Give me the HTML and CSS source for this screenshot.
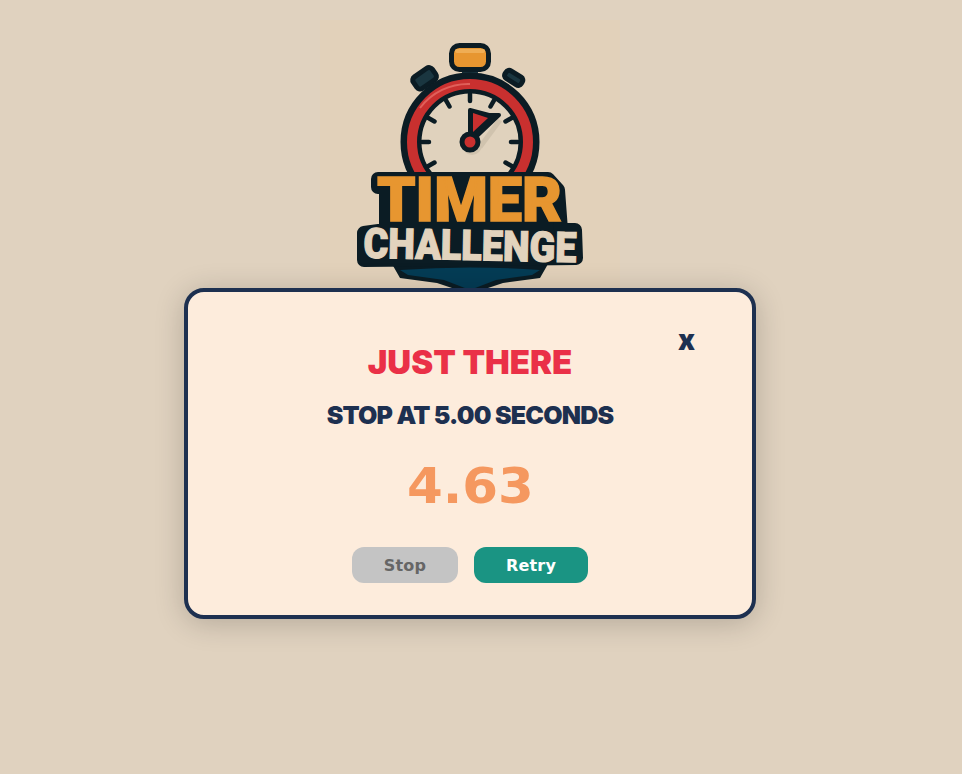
FILE: index.html
```html
<!DOCTYPE html>
<html lang="en">
<head>
<meta charset="utf-8">
<title>Timer Challenge</title>
<link rel="stylesheet" href="styles.css">
</head>
<body>
<main class="page">
  <svg class="logo" viewBox="0 0 300 300" width="300" height="300" role="img" aria-label="Timer Challenge logo">
    <rect width="300" height="300" fill="#e2d1ba"/>
    <rect x="142" y="49" width="16" height="9" fill="#1a3640"/>
    <rect x="131.500" y="25.500" width="37" height="24" rx="8" fill="#e79630" stroke="#0b1c24" stroke-width="5"/>
    <rect x="135" y="29" width="30" height="4" rx="2" fill="#efad54"/>
    <g transform="rotate(-35 105 58)"><rect x="93" y="51" width="23" height="14" rx="4" fill="#1a3640" stroke="#0b1c24" stroke-width="5"/></g>
    <g transform="rotate(32 193 58)"><rect x="184" y="53" width="19" height="9" rx="3.500" fill="#1a3640" stroke="#0b1c24" stroke-width="5"/></g>
    <circle cx="150" cy="122" r="59" fill="#e0d2bd" stroke="#0b1c24" stroke-width="21"/>
    <circle cx="150" cy="122" r="58" fill="none" stroke="#c9302f" stroke-width="10"/>
    <path d="M100 88 A60 60 0 0 1 150 64" fill="none" stroke="#e0605a" stroke-width="2"/>
    <g stroke="#0b1c24" stroke-width="4.500" stroke-linecap="round">
      <path d="M150 74V81M150 163V170M102 122H109M191 122H198"/>
      <path d="M174 80.400L170.500 86.500M191.600 98L185.500 101.500M191.600 146L185.500 142.500M174 163.600L170.500 157.500M126 163.600L129.500 157.500M108.400 146L114.500 142.500M108.400 98L114.500 101.500M126 80.400L129.500 86.500"/>
    </g>
    <path d="M180 100L160 127" stroke="#d0c3ae" stroke-width="5"/>
    <circle cx="152" cy="125" r="10" fill="#d0c3ae"/>
    <path d="M150 90L169 95L179 95L158 115L150 120Z" fill="#0b1c24" stroke="#0b1c24" stroke-width="4" stroke-linejoin="round"/>
    <path d="M153 93L168 98L153 112Z" fill="#c9302f"/>
    <circle cx="150" cy="122" r="8" fill="#c9302f" stroke="#0b1c24" stroke-width="5"/>

    <path d="M72 244L80 258L117 263L150 274L183 263L220 258L228 244Z" fill="#0b1c24"/>
    <path d="M58 159H228L238 170L241 210H255L256 238L44 240L44 213L66 210L66 167L58 167Z" fill="#0b1c24" stroke="#0b1c24" stroke-width="14" stroke-linejoin="round"/>
    <path d="M80 250Q150 245 220 250L212 255L176 260L150 270L124 260L88 255Z" fill="#043c55"/>
    <text class="logo-timer" x="149.500" y="201" textLength="185" lengthAdjust="spacingAndGlyphs">TIMER</text>
    <g transform="rotate(1.250 150 225)">
      <text class="logo-challenge" x="150" y="240" textLength="213" lengthAdjust="spacingAndGlyphs">CHALLENGE</text>
    </g>
  </svg>

  <section class="modal">
    <button class="close" type="button">x</button>
    <h2 class="result">JUST THERE</h2>
    <h3 class="goal">STOP AT 5.00 SECONDS</h3>
    <div class="time">4.63</div>
    <div class="actions">
      <button class="btn btn-stop" type="button">Stop</button>
      <button class="btn btn-retry" type="button">Retry</button>
    </div>
  </section>
</main>
</body>
</html>
```
FILE: styles.css
```css
* { box-sizing: border-box; }
html, body { margin: 0; height: 100%; }
body { background: #e0d2bf; overflow: hidden; }
.page {
  position: relative;
  height: 774px;
  display: flex;
  flex-direction: column;
  align-items: center;
  padding: 20px 22px 0 0;
}
.logo { display: block; flex: none; }
.logo-timer, .logo-challenge {
  font-family: "Roboto", "Liberation Sans", sans-serif;
  font-weight: 900;
  text-anchor: middle;
}
.logo-timer { font-size: 62px; fill: #e79630; stroke: #e79630; stroke-width: 1.5px; }
.logo-challenge { font-size: 42px; fill: #e2d3bd; stroke: #e2d3bd; stroke-width: 1.2px; }

.modal {
  position: absolute;
  left: 184px;
  top: 288px;
  width: 572px;
  height: 331px;
  background: #fdecdc;
  border: 4px solid #1d3050;
  border-radius: 20px;
  box-shadow: 0 4px 30px rgba(0, 0, 0, 0.2);
  display: flex;
  flex-direction: column;
  align-items: center;
  padding-top: 52px;
}
.close {
  position: absolute;
  top: 34px;
  right: 57px;
  padding: 0;
  border: 0;
  background: none;
  color: #1d3050;
  font: 900 28px/1 "Inter", sans-serif;
  cursor: pointer;
}
.result, .goal {
  margin: 0;
  font-family: "Inter", "Roboto", sans-serif;
  font-weight: 900;
  white-space: nowrap;
}
.result {
  font-size: 33px;
  line-height: 36px;
  color: #ea3047;
}
.goal {
  margin-top: 20px;
  font-size: 25px;
  line-height: 30px;
  letter-spacing: -0.8px;
  color: #1d3050;
}
.time {
  margin-top: 29px;
  font-family: "DejaVu Sans", sans-serif;
  font-weight: 700;
  font-size: 49px;
  line-height: 56px;
  transform: scaleX(1.05);
  color: #f5985f;
}
.actions {
  margin-top: 32px;
  display: flex;
  gap: 16px;
}
.btn {
  height: 36px;
  padding: 0;
  border: 0;
  border-radius: 12px;
  font-family: "DejaVu Sans", sans-serif;
  font-weight: 700;
  font-size: 16px;
  letter-spacing: 0.2px;
  cursor: pointer;
}
.btn-stop { width: 106px; background: #c4c4c4; color: #666; }
.btn-retry { width: 114px; background: #1a9483; color: #fff; }
```
